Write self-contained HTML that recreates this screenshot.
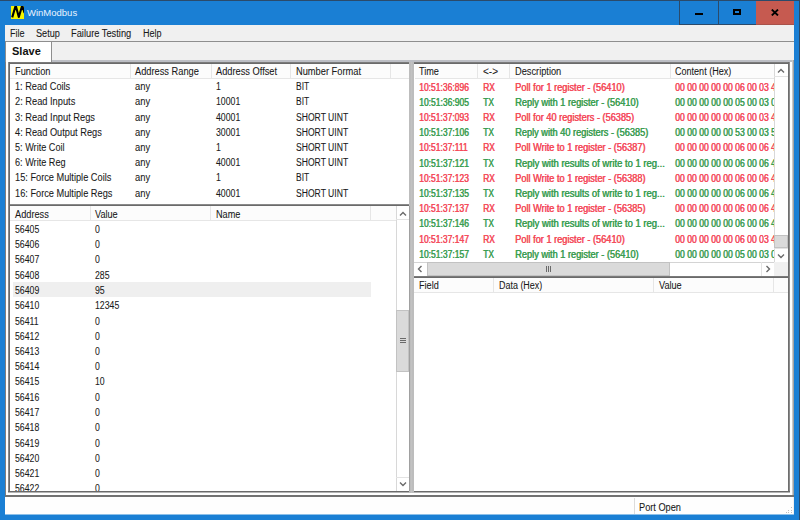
<!DOCTYPE html><html><head><meta charset="utf-8"><style>
*{margin:0;padding:0;box-sizing:border-box}
html,body{width:800px;height:520px;overflow:hidden;background:#1a7fd4;font-family:"Liberation Sans",sans-serif;position:relative}
.a{position:absolute}
.t{position:absolute;line-height:12px;white-space:nowrap;transform-origin:0 0;-webkit-text-stroke-width:0.08px}
.clip{position:absolute;overflow:hidden}
</style></head><body><div class="a" style="left:0px;top:0px;width:800px;height:1px;background:#2b4a6a;"></div>
<div class="a" style="left:799px;top:0px;width:1px;height:520px;background:#2b4a6a;"></div>
<div class="a" style="left:11px;top:6px;width:13px;height:13px;background:#f6f600;"></div>
<svg class="a" style="left:11px;top:6px;overflow:hidden" width="13" height="13"><path d="M1.2 11.4 L4.7 -0.5 L7.8 11 L11.2 -0.5 L13.6 7" stroke="#000" stroke-width="2.1" stroke-linejoin="round" fill="none"/></svg>
<div class="t" style="left:27px;top:7px;color:#eaf4ff;font-size:9.5px;transform:scaleX(1.000);-webkit-text-stroke-width:0">WinModbus</div>
<div class="a" style="left:679px;top:0px;width:1px;height:25px;background:#2b4a6a;"></div>
<div class="a" style="left:718px;top:0px;width:1px;height:25px;background:#2b4a6a;"></div>
<div class="a" style="left:679px;top:24px;width:77px;height:1px;background:#2b4a6a;"></div>
<div class="a" style="left:756px;top:1px;width:38px;height:24px;background:#c65a50;"></div>
<div class="a" style="left:756px;top:24px;width:38px;height:1px;background:#a8524a;"></div>
<div class="a" style="left:695px;top:13px;width:8px;height:2px;background:#000;"></div>
<div class="a" style="left:733px;top:9px;width:8px;height:6px;background:transparent;border:2px solid #000"></div>
<svg class="a" style="left:771px;top:9px" width="8" height="7"><path d="M0.8 0.6 L7 6.4 M7 0.6 L0.8 6.4" stroke="#000" stroke-width="1.9" fill="none"/></svg>
<div class="a" style="left:5px;top:25px;width:789px;height:490px;background:#f0f0f0;"></div>
<div class="t" style="left:10px;top:28px;color:#1a1a1a;font-size:10px;transform:scaleX(0.903);">File</div>
<div class="t" style="left:36px;top:28px;color:#1a1a1a;font-size:10px;transform:scaleX(0.915);">Setup</div>
<div class="t" style="left:71px;top:28px;color:#1a1a1a;font-size:10px;transform:scaleX(0.929);">Failure Testing</div>
<div class="t" style="left:143px;top:28px;color:#1a1a1a;font-size:10px;transform:scaleX(0.906);">Help</div>
<div class="a" style="left:5px;top:41px;width:789px;height:1px;background:#8e8e8e;"></div>
<div class="a" style="left:5px;top:60px;width:789px;height:437px;background:#ffffff;"></div>
<div class="a" style="left:5px;top:60px;width:789px;height:2px;background:#bcbec4;"></div>
<div class="a" style="left:5px;top:60px;width:1px;height:437px;background:#7e7e7e;"></div>
<div class="a" style="left:792px;top:60px;width:1px;height:437px;background:#c8c8c8;"></div>
<div class="a" style="left:793px;top:60px;width:1px;height:437px;background:#a2a2a2;"></div>
<div class="a" style="left:5px;top:495px;width:789px;height:2px;background:#727272;"></div>
<div class="a" style="left:8px;top:62px;width:782px;height:431px;background:#ffffff;"></div>
<div class="a" style="left:8px;top:62px;width:782px;height:1px;background:#7a7a7a;"></div>
<div class="a" style="left:8px;top:63px;width:782px;height:1px;background:#6a6a6a;"></div>
<div class="a" style="left:8px;top:62px;width:1px;height:431px;background:#8a8a8a;"></div>
<div class="a" style="left:9px;top:62px;width:1px;height:431px;background:#6a6a6a;"></div>
<div class="a" style="left:788px;top:62px;width:1px;height:431px;background:#6e6e6e;"></div>
<div class="a" style="left:789px;top:62px;width:1px;height:431px;background:#8a8a8a;"></div>
<div class="a" style="left:8px;top:491px;width:782px;height:1px;background:#6a6a6a;"></div>
<div class="a" style="left:8px;top:492px;width:782px;height:1px;background:#b4b4b4;"></div>
<div class="a" style="left:10px;top:204px;width:399px;height:1px;background:#8a8a8a;"></div>
<div class="a" style="left:10px;top:205px;width:399px;height:1px;background:#6a6a6a;"></div>
<div class="a" style="left:414px;top:276px;width:374px;height:1px;background:#7a7a7a;"></div>
<div class="a" style="left:414px;top:277px;width:374px;height:1px;background:#6a6a6a;"></div>
<div class="a" style="left:5px;top:41px;width:47px;height:21px;background:#ffffff;border:1px solid #8e8e8e;border-bottom:none"></div>
<div class="t" style="left:12px;top:45px;color:#111;font-size:11px;transform:scaleX(1.000);font-weight:bold;-webkit-text-stroke-width:0">Slave</div>
<div class="a" style="left:10px;top:64px;width:399px;height:15px;background:#fcfcfc;border-bottom:1px solid #e6e6e6"></div>
<div class="t" style="left:15px;top:66px;color:#1a1a1a;font-size:10px;transform:scaleX(0.924);">Function</div>
<div class="a" style="left:130px;top:64px;width:1px;height:15px;background:#e6e6e6;"></div>
<div class="t" style="left:135px;top:66px;color:#1a1a1a;font-size:10px;transform:scaleX(0.927);">Address Range</div>
<div class="a" style="left:211px;top:64px;width:1px;height:15px;background:#e6e6e6;"></div>
<div class="t" style="left:216px;top:66px;color:#1a1a1a;font-size:10px;transform:scaleX(0.926);">Address Offset</div>
<div class="a" style="left:290px;top:64px;width:1px;height:15px;background:#e6e6e6;"></div>
<div class="t" style="left:296px;top:66px;color:#1a1a1a;font-size:10px;transform:scaleX(0.928);">Number Format</div>
<div class="a" style="left:390px;top:64px;width:1px;height:15px;background:#e6e6e6;"></div>
<div class="t" style="left:15px;top:81px;color:#1a1a1a;font-size:10px;transform:scaleX(0.919);">1: Read Coils</div>
<div class="t" style="left:135px;top:81px;color:#1a1a1a;font-size:10px;transform:scaleX(0.938);">any</div>
<div class="t" style="left:216px;top:81px;color:#1a1a1a;font-size:10px;transform:scaleX(0.872);">1</div>
<div class="t" style="left:296px;top:81px;color:#1a1a1a;font-size:10px;transform:scaleX(0.845);">BIT</div>
<div class="t" style="left:15px;top:96px;color:#1a1a1a;font-size:10px;transform:scaleX(0.927);">2: Read Inputs</div>
<div class="t" style="left:135px;top:96px;color:#1a1a1a;font-size:10px;transform:scaleX(0.938);">any</div>
<div class="t" style="left:216px;top:96px;color:#1a1a1a;font-size:10px;transform:scaleX(0.872);">10001</div>
<div class="t" style="left:296px;top:96px;color:#1a1a1a;font-size:10px;transform:scaleX(0.845);">BIT</div>
<div class="t" style="left:15px;top:112px;color:#1a1a1a;font-size:10px;transform:scaleX(0.928);">3: Read Input Regs</div>
<div class="t" style="left:135px;top:112px;color:#1a1a1a;font-size:10px;transform:scaleX(0.938);">any</div>
<div class="t" style="left:216px;top:112px;color:#1a1a1a;font-size:10px;transform:scaleX(0.872);">40001</div>
<div class="t" style="left:296px;top:112px;color:#1a1a1a;font-size:10px;transform:scaleX(0.858);">SHORT UINT</div>
<div class="t" style="left:15px;top:127px;color:#1a1a1a;font-size:10px;transform:scaleX(0.924);">4: Read Output Regs</div>
<div class="t" style="left:135px;top:127px;color:#1a1a1a;font-size:10px;transform:scaleX(0.938);">any</div>
<div class="t" style="left:216px;top:127px;color:#1a1a1a;font-size:10px;transform:scaleX(0.872);">30001</div>
<div class="t" style="left:296px;top:127px;color:#1a1a1a;font-size:10px;transform:scaleX(0.858);">SHORT UINT</div>
<div class="t" style="left:15px;top:142px;color:#1a1a1a;font-size:10px;transform:scaleX(0.913);">5: Write Coil</div>
<div class="t" style="left:135px;top:142px;color:#1a1a1a;font-size:10px;transform:scaleX(0.938);">any</div>
<div class="t" style="left:216px;top:142px;color:#1a1a1a;font-size:10px;transform:scaleX(0.872);">1</div>
<div class="t" style="left:296px;top:142px;color:#1a1a1a;font-size:10px;transform:scaleX(0.858);">SHORT UINT</div>
<div class="t" style="left:15px;top:157px;color:#1a1a1a;font-size:10px;transform:scaleX(0.913);">6: Write Reg</div>
<div class="t" style="left:135px;top:157px;color:#1a1a1a;font-size:10px;transform:scaleX(0.938);">any</div>
<div class="t" style="left:216px;top:157px;color:#1a1a1a;font-size:10px;transform:scaleX(0.872);">40001</div>
<div class="t" style="left:296px;top:157px;color:#1a1a1a;font-size:10px;transform:scaleX(0.858);">SHORT UINT</div>
<div class="t" style="left:15px;top:172px;color:#1a1a1a;font-size:10px;transform:scaleX(0.922);">15: Force Multiple Coils</div>
<div class="t" style="left:135px;top:172px;color:#1a1a1a;font-size:10px;transform:scaleX(0.938);">any</div>
<div class="t" style="left:216px;top:172px;color:#1a1a1a;font-size:10px;transform:scaleX(0.872);">1</div>
<div class="t" style="left:296px;top:172px;color:#1a1a1a;font-size:10px;transform:scaleX(0.845);">BIT</div>
<div class="t" style="left:15px;top:188px;color:#1a1a1a;font-size:10px;transform:scaleX(0.922);">16: Force Multiple Regs</div>
<div class="t" style="left:135px;top:188px;color:#1a1a1a;font-size:10px;transform:scaleX(0.938);">any</div>
<div class="t" style="left:216px;top:188px;color:#1a1a1a;font-size:10px;transform:scaleX(0.872);">40001</div>
<div class="t" style="left:296px;top:188px;color:#1a1a1a;font-size:10px;transform:scaleX(0.858);">SHORT UINT</div>
<div class="clip" style="left:10px;top:206px;width:386px;height:285px">
<div class="a" style="left:0;top:0;width:386px;height:15px;background:#fcfcfc;border-bottom:1px solid #e6e6e6"></div>
<div class="a" style="left:80px;top:0;width:1px;height:15px;background:#e6e6e6"></div>
<div class="a" style="left:200px;top:0;width:1px;height:15px;background:#e6e6e6"></div>
<div class="a" style="left:360px;top:0;width:1px;height:15px;background:#e6e6e6"></div>
<div class="t" style="left:5px;top:3px;color:#1a1a1a;font-size:10px;transform:scaleX(0.921)">Address</div>
<div class="t" style="left:85px;top:3px;color:#1a1a1a;font-size:10px;transform:scaleX(0.914)">Value</div>
<div class="t" style="left:206px;top:3px;color:#1a1a1a;font-size:10px;transform:scaleX(0.913)">Name</div>
<div class="a" style="left:3px;top:76px;width:358px;height:15px;background:#efefef"></div>
<div class="t" style="left:5px;top:18px;color:#1a1a1a;font-size:10px;transform:scaleX(0.872)">56405</div>
<div class="t" style="left:85px;top:18px;color:#1a1a1a;font-size:10px;transform:scaleX(0.872)">0</div>
<div class="t" style="left:5px;top:33px;color:#1a1a1a;font-size:10px;transform:scaleX(0.872)">56406</div>
<div class="t" style="left:85px;top:33px;color:#1a1a1a;font-size:10px;transform:scaleX(0.872)">0</div>
<div class="t" style="left:5px;top:48px;color:#1a1a1a;font-size:10px;transform:scaleX(0.872)">56407</div>
<div class="t" style="left:85px;top:48px;color:#1a1a1a;font-size:10px;transform:scaleX(0.872)">0</div>
<div class="t" style="left:5px;top:64px;color:#1a1a1a;font-size:10px;transform:scaleX(0.872)">56408</div>
<div class="t" style="left:85px;top:64px;color:#1a1a1a;font-size:10px;transform:scaleX(0.872)">285</div>
<div class="t" style="left:5px;top:79px;color:#1a1a1a;font-size:10px;transform:scaleX(0.872)">56409</div>
<div class="t" style="left:85px;top:79px;color:#1a1a1a;font-size:10px;transform:scaleX(0.872)">95</div>
<div class="t" style="left:5px;top:94px;color:#1a1a1a;font-size:10px;transform:scaleX(0.872)">56410</div>
<div class="t" style="left:85px;top:94px;color:#1a1a1a;font-size:10px;transform:scaleX(0.872)">12345</div>
<div class="t" style="left:5px;top:110px;color:#1a1a1a;font-size:10px;transform:scaleX(0.872)">56411</div>
<div class="t" style="left:85px;top:110px;color:#1a1a1a;font-size:10px;transform:scaleX(0.872)">0</div>
<div class="t" style="left:5px;top:125px;color:#1a1a1a;font-size:10px;transform:scaleX(0.872)">56412</div>
<div class="t" style="left:85px;top:125px;color:#1a1a1a;font-size:10px;transform:scaleX(0.872)">0</div>
<div class="t" style="left:5px;top:140px;color:#1a1a1a;font-size:10px;transform:scaleX(0.872)">56413</div>
<div class="t" style="left:85px;top:140px;color:#1a1a1a;font-size:10px;transform:scaleX(0.872)">0</div>
<div class="t" style="left:5px;top:155px;color:#1a1a1a;font-size:10px;transform:scaleX(0.872)">56414</div>
<div class="t" style="left:85px;top:155px;color:#1a1a1a;font-size:10px;transform:scaleX(0.872)">0</div>
<div class="t" style="left:5px;top:170px;color:#1a1a1a;font-size:10px;transform:scaleX(0.872)">56415</div>
<div class="t" style="left:85px;top:170px;color:#1a1a1a;font-size:10px;transform:scaleX(0.872)">10</div>
<div class="t" style="left:5px;top:186px;color:#1a1a1a;font-size:10px;transform:scaleX(0.872)">56416</div>
<div class="t" style="left:85px;top:186px;color:#1a1a1a;font-size:10px;transform:scaleX(0.872)">0</div>
<div class="t" style="left:5px;top:201px;color:#1a1a1a;font-size:10px;transform:scaleX(0.872)">56417</div>
<div class="t" style="left:85px;top:201px;color:#1a1a1a;font-size:10px;transform:scaleX(0.872)">0</div>
<div class="t" style="left:5px;top:216px;color:#1a1a1a;font-size:10px;transform:scaleX(0.872)">56418</div>
<div class="t" style="left:85px;top:216px;color:#1a1a1a;font-size:10px;transform:scaleX(0.872)">0</div>
<div class="t" style="left:5px;top:232px;color:#1a1a1a;font-size:10px;transform:scaleX(0.872)">56419</div>
<div class="t" style="left:85px;top:232px;color:#1a1a1a;font-size:10px;transform:scaleX(0.872)">0</div>
<div class="t" style="left:5px;top:247px;color:#1a1a1a;font-size:10px;transform:scaleX(0.872)">56420</div>
<div class="t" style="left:85px;top:247px;color:#1a1a1a;font-size:10px;transform:scaleX(0.872)">0</div>
<div class="t" style="left:5px;top:262px;color:#1a1a1a;font-size:10px;transform:scaleX(0.872)">56421</div>
<div class="t" style="left:85px;top:262px;color:#1a1a1a;font-size:10px;transform:scaleX(0.872)">0</div>
<div class="t" style="left:5px;top:277px;color:#1a1a1a;font-size:10px;transform:scaleX(0.872)">56422</div>
<div class="t" style="left:85px;top:277px;color:#1a1a1a;font-size:10px;transform:scaleX(0.872)">0</div>
</div>
<div class="a" style="left:396px;top:206px;width:13px;height:285px;background:#ffffff;border-left:1px solid #d8d8d8"></div>
<div class="a" style="left:396px;top:219px;width:13px;height:1px;background:#e3e3e3;"></div>
<div class="a" style="left:396px;top:477px;width:13px;height:1px;background:#e3e3e3;"></div>
<div class="a" style="left:396px;top:310px;width:13px;height:62px;background:#dadada;border:1px solid #c2c2c2"></div>
<div class="a" style="left:400px;top:338px;width:6px;height:1px;background:#6a6a6a;"></div>
<div class="a" style="left:400px;top:340px;width:6px;height:1px;background:#6a6a6a;"></div>
<div class="a" style="left:400px;top:342px;width:6px;height:1px;background:#6a6a6a;"></div>
<svg class="a" style="left:399px;top:211px" width="8" height="6"><path d="M1 4.5 L4 1.5 L7 4.5" stroke="#6a6a6a" stroke-width="1.4" fill="none"/></svg>
<svg class="a" style="left:399px;top:481px" width="8" height="6"><path d="M1 1.5 L4 4.5 L7 1.5" stroke="#6a6a6a" stroke-width="1.4" fill="none"/></svg>
<div class="a" style="left:409px;top:62px;width:5px;height:431px;background:#bdbdbd;"></div>
<div class="a" style="left:411px;top:62px;width:1px;height:431px;background:#c2c2c2;"></div>
<div class="a" style="left:409px;top:206px;width:1px;height:285px;background:#a0a0a0;"></div>
<div class="clip" style="left:415px;top:64px;width:359px;height:198px">
<div class="a" style="left:0;top:0;width:359px;height:15px;background:#fcfcfc;border-bottom:1px solid #e6e6e6"></div>
<div class="a" style="left:62px;top:0;width:1px;height:15px;background:#e6e6e6"></div>
<div class="a" style="left:94px;top:0;width:1px;height:15px;background:#e6e6e6"></div>
<div class="a" style="left:255px;top:0;width:1px;height:15px;background:#e6e6e6"></div>
<div class="t" style="left:4px;top:2px;color:#1a1a1a;font-size:10px;transform:scaleX(0.913)">Time</div>
<div class="t" style="left:68px;top:2px;color:#1a1a1a;font-size:10px;transform:scaleX(1.000)">&lt;-&gt;</div>
<div class="t" style="left:100px;top:2px;color:#1a1a1a;font-size:10px;transform:scaleX(0.925)">Description</div>
<div class="t" style="left:260px;top:2px;color:#1a1a1a;font-size:10px;transform:scaleX(0.904)">Content (Hex)</div>
<div class="t" style="left:4px;top:18px;color:#f54a5a;font-size:10px;transform:scaleX(0.853);-webkit-text-stroke-width:0.1px;text-shadow:0.45px 0 0 #f54a5a">10:51:36:896</div>
<div class="t" style="left:68px;top:18px;color:#f54a5a;font-size:10px;transform:scaleX(0.845);-webkit-text-stroke-width:0.1px;text-shadow:0.45px 0 0 #f54a5a">RX</div>
<div class="t" style="left:100px;top:18px;color:#f54a5a;font-size:10px;transform:scaleX(0.921);-webkit-text-stroke-width:0.1px;text-shadow:0.45px 0 0 #f54a5a">Poll for 1 register - (56410)</div>
<div class="t" style="left:260px;top:18px;color:#f54a5a;font-size:10px;transform:scaleX(0.863);-webkit-text-stroke-width:0.1px;text-shadow:0.45px 0 0 #f54a5a">00 00 00 00 00 06 00 03 4</div>
<div class="t" style="left:4px;top:33px;color:#3b9e52;font-size:10px;transform:scaleX(0.853);-webkit-text-stroke-width:0.1px;text-shadow:0.45px 0 0 #3b9e52">10:51:36:905</div>
<div class="t" style="left:68px;top:33px;color:#3b9e52;font-size:10px;transform:scaleX(0.845);-webkit-text-stroke-width:0.1px;text-shadow:0.45px 0 0 #3b9e52">TX</div>
<div class="t" style="left:100px;top:33px;color:#3b9e52;font-size:10px;transform:scaleX(0.922);-webkit-text-stroke-width:0.1px;text-shadow:0.45px 0 0 #3b9e52">Reply with 1 register - (56410)</div>
<div class="t" style="left:260px;top:33px;color:#3b9e52;font-size:10px;transform:scaleX(0.863);-webkit-text-stroke-width:0.1px;text-shadow:0.45px 0 0 #3b9e52">00 00 00 00 00 05 00 03 0</div>
<div class="t" style="left:4px;top:48px;color:#f54a5a;font-size:10px;transform:scaleX(0.853);-webkit-text-stroke-width:0.1px;text-shadow:0.45px 0 0 #f54a5a">10:51:37:093</div>
<div class="t" style="left:68px;top:48px;color:#f54a5a;font-size:10px;transform:scaleX(0.845);-webkit-text-stroke-width:0.1px;text-shadow:0.45px 0 0 #f54a5a">RX</div>
<div class="t" style="left:100px;top:48px;color:#f54a5a;font-size:10px;transform:scaleX(0.919);-webkit-text-stroke-width:0.1px;text-shadow:0.45px 0 0 #f54a5a">Poll for 40 registers - (56385)</div>
<div class="t" style="left:260px;top:48px;color:#f54a5a;font-size:10px;transform:scaleX(0.863);-webkit-text-stroke-width:0.1px;text-shadow:0.45px 0 0 #f54a5a">00 00 00 00 00 06 00 03 4</div>
<div class="t" style="left:4px;top:63px;color:#3b9e52;font-size:10px;transform:scaleX(0.853);-webkit-text-stroke-width:0.1px;text-shadow:0.45px 0 0 #3b9e52">10:51:37:106</div>
<div class="t" style="left:68px;top:63px;color:#3b9e52;font-size:10px;transform:scaleX(0.845);-webkit-text-stroke-width:0.1px;text-shadow:0.45px 0 0 #3b9e52">TX</div>
<div class="t" style="left:100px;top:63px;color:#3b9e52;font-size:10px;transform:scaleX(0.921);-webkit-text-stroke-width:0.1px;text-shadow:0.45px 0 0 #3b9e52">Reply with 40 registers - (56385)</div>
<div class="t" style="left:260px;top:63px;color:#3b9e52;font-size:10px;transform:scaleX(0.863);-webkit-text-stroke-width:0.1px;text-shadow:0.45px 0 0 #3b9e52">00 00 00 00 00 53 00 03 5</div>
<div class="t" style="left:4px;top:78px;color:#f54a5a;font-size:10px;transform:scaleX(0.853);-webkit-text-stroke-width:0.1px;text-shadow:0.45px 0 0 #f54a5a">10:51:37:111</div>
<div class="t" style="left:68px;top:78px;color:#f54a5a;font-size:10px;transform:scaleX(0.845);-webkit-text-stroke-width:0.1px;text-shadow:0.45px 0 0 #f54a5a">RX</div>
<div class="t" style="left:100px;top:78px;color:#f54a5a;font-size:10px;transform:scaleX(0.921);-webkit-text-stroke-width:0.1px;text-shadow:0.45px 0 0 #f54a5a">Poll Write to 1 register - (56387)</div>
<div class="t" style="left:260px;top:78px;color:#f54a5a;font-size:10px;transform:scaleX(0.863);-webkit-text-stroke-width:0.1px;text-shadow:0.45px 0 0 #f54a5a">00 00 00 00 00 06 00 06 4</div>
<div class="t" style="left:4px;top:94px;color:#3b9e52;font-size:10px;transform:scaleX(0.853);-webkit-text-stroke-width:0.1px;text-shadow:0.45px 0 0 #3b9e52">10:51:37:121</div>
<div class="t" style="left:68px;top:94px;color:#3b9e52;font-size:10px;transform:scaleX(0.845);-webkit-text-stroke-width:0.1px;text-shadow:0.45px 0 0 #3b9e52">TX</div>
<div class="t" style="left:100px;top:94px;color:#3b9e52;font-size:10px;transform:scaleX(0.945);-webkit-text-stroke-width:0.1px;text-shadow:0.45px 0 0 #3b9e52">Reply with results of write to 1 reg...</div>
<div class="t" style="left:260px;top:94px;color:#3b9e52;font-size:10px;transform:scaleX(0.863);-webkit-text-stroke-width:0.1px;text-shadow:0.45px 0 0 #3b9e52">00 00 00 00 00 06 00 06 4</div>
<div class="t" style="left:4px;top:109px;color:#f54a5a;font-size:10px;transform:scaleX(0.853);-webkit-text-stroke-width:0.1px;text-shadow:0.45px 0 0 #f54a5a">10:51:37:123</div>
<div class="t" style="left:68px;top:109px;color:#f54a5a;font-size:10px;transform:scaleX(0.845);-webkit-text-stroke-width:0.1px;text-shadow:0.45px 0 0 #f54a5a">RX</div>
<div class="t" style="left:100px;top:109px;color:#f54a5a;font-size:10px;transform:scaleX(0.921);-webkit-text-stroke-width:0.1px;text-shadow:0.45px 0 0 #f54a5a">Poll Write to 1 register - (56388)</div>
<div class="t" style="left:260px;top:109px;color:#f54a5a;font-size:10px;transform:scaleX(0.863);-webkit-text-stroke-width:0.1px;text-shadow:0.45px 0 0 #f54a5a">00 00 00 00 00 06 00 06 4</div>
<div class="t" style="left:4px;top:124px;color:#3b9e52;font-size:10px;transform:scaleX(0.853);-webkit-text-stroke-width:0.1px;text-shadow:0.45px 0 0 #3b9e52">10:51:37:135</div>
<div class="t" style="left:68px;top:124px;color:#3b9e52;font-size:10px;transform:scaleX(0.845);-webkit-text-stroke-width:0.1px;text-shadow:0.45px 0 0 #3b9e52">TX</div>
<div class="t" style="left:100px;top:124px;color:#3b9e52;font-size:10px;transform:scaleX(0.945);-webkit-text-stroke-width:0.1px;text-shadow:0.45px 0 0 #3b9e52">Reply with results of write to 1 reg...</div>
<div class="t" style="left:260px;top:124px;color:#3b9e52;font-size:10px;transform:scaleX(0.863);-webkit-text-stroke-width:0.1px;text-shadow:0.45px 0 0 #3b9e52">00 00 00 00 00 06 00 06 4</div>
<div class="t" style="left:4px;top:139px;color:#f54a5a;font-size:10px;transform:scaleX(0.853);-webkit-text-stroke-width:0.1px;text-shadow:0.45px 0 0 #f54a5a">10:51:37:137</div>
<div class="t" style="left:68px;top:139px;color:#f54a5a;font-size:10px;transform:scaleX(0.845);-webkit-text-stroke-width:0.1px;text-shadow:0.45px 0 0 #f54a5a">RX</div>
<div class="t" style="left:100px;top:139px;color:#f54a5a;font-size:10px;transform:scaleX(0.921);-webkit-text-stroke-width:0.1px;text-shadow:0.45px 0 0 #f54a5a">Poll Write to 1 register - (56385)</div>
<div class="t" style="left:260px;top:139px;color:#f54a5a;font-size:10px;transform:scaleX(0.863);-webkit-text-stroke-width:0.1px;text-shadow:0.45px 0 0 #f54a5a">00 00 00 00 00 06 00 06 4</div>
<div class="t" style="left:4px;top:154px;color:#3b9e52;font-size:10px;transform:scaleX(0.853);-webkit-text-stroke-width:0.1px;text-shadow:0.45px 0 0 #3b9e52">10:51:37:146</div>
<div class="t" style="left:68px;top:154px;color:#3b9e52;font-size:10px;transform:scaleX(0.845);-webkit-text-stroke-width:0.1px;text-shadow:0.45px 0 0 #3b9e52">TX</div>
<div class="t" style="left:100px;top:154px;color:#3b9e52;font-size:10px;transform:scaleX(0.945);-webkit-text-stroke-width:0.1px;text-shadow:0.45px 0 0 #3b9e52">Reply with results of write to 1 reg...</div>
<div class="t" style="left:260px;top:154px;color:#3b9e52;font-size:10px;transform:scaleX(0.863);-webkit-text-stroke-width:0.1px;text-shadow:0.45px 0 0 #3b9e52">00 00 00 00 00 06 00 06 4</div>
<div class="t" style="left:4px;top:170px;color:#f54a5a;font-size:10px;transform:scaleX(0.853);-webkit-text-stroke-width:0.1px;text-shadow:0.45px 0 0 #f54a5a">10:51:37:147</div>
<div class="t" style="left:68px;top:170px;color:#f54a5a;font-size:10px;transform:scaleX(0.845);-webkit-text-stroke-width:0.1px;text-shadow:0.45px 0 0 #f54a5a">RX</div>
<div class="t" style="left:100px;top:170px;color:#f54a5a;font-size:10px;transform:scaleX(0.921);-webkit-text-stroke-width:0.1px;text-shadow:0.45px 0 0 #f54a5a">Poll for 1 register - (56410)</div>
<div class="t" style="left:260px;top:170px;color:#f54a5a;font-size:10px;transform:scaleX(0.863);-webkit-text-stroke-width:0.1px;text-shadow:0.45px 0 0 #f54a5a">00 00 00 00 00 06 00 03 4</div>
<div class="t" style="left:4px;top:185px;color:#3b9e52;font-size:10px;transform:scaleX(0.853);-webkit-text-stroke-width:0.1px;text-shadow:0.45px 0 0 #3b9e52">10:51:37:157</div>
<div class="t" style="left:68px;top:185px;color:#3b9e52;font-size:10px;transform:scaleX(0.845);-webkit-text-stroke-width:0.1px;text-shadow:0.45px 0 0 #3b9e52">TX</div>
<div class="t" style="left:100px;top:185px;color:#3b9e52;font-size:10px;transform:scaleX(0.922);-webkit-text-stroke-width:0.1px;text-shadow:0.45px 0 0 #3b9e52">Reply with 1 register - (56410)</div>
<div class="t" style="left:260px;top:185px;color:#3b9e52;font-size:10px;transform:scaleX(0.863);-webkit-text-stroke-width:0.1px;text-shadow:0.45px 0 0 #3b9e52">00 00 00 00 00 05 00 03 0</div>
</div>
<div class="a" style="left:774px;top:64px;width:14px;height:198px;background:#ffffff;border-left:1px solid #d8d8d8"></div>
<div class="a" style="left:774px;top:76px;width:14px;height:1px;background:#e3e3e3;"></div>
<div class="a" style="left:774px;top:248px;width:14px;height:1px;background:#e3e3e3;"></div>
<div class="a" style="left:774px;top:235px;width:14px;height:13px;background:#dadada;border:1px solid #c2c2c2"></div>
<svg class="a" style="left:777px;top:68px" width="8" height="6"><path d="M1 4.5 L4 1.5 L7 4.5" stroke="#6a6a6a" stroke-width="1.4" fill="none"/></svg>
<svg class="a" style="left:777px;top:253px" width="8" height="6"><path d="M1 1.5 L4 4.5 L7 1.5" stroke="#6a6a6a" stroke-width="1.4" fill="none"/></svg>
<div class="a" style="left:414px;top:262px;width:374px;height:14px;background:#ffffff;border-top:1px solid #d4d4d4"></div>
<div class="a" style="left:427px;top:262px;width:243px;height:14px;background:#dadada;border:1px solid #c2c2c2"></div>
<div class="a" style="left:761px;top:262px;width:1px;height:14px;background:#e3e3e3;"></div>
<div class="a" style="left:774px;top:262px;width:14px;height:14px;background:#f0f0f0;"></div>
<div class="a" style="left:546px;top:266px;width:1px;height:6px;background:#6a6a6a;"></div>
<div class="a" style="left:548px;top:266px;width:1px;height:6px;background:#6a6a6a;"></div>
<div class="a" style="left:550px;top:266px;width:1px;height:6px;background:#6a6a6a;"></div>
<svg class="a" style="left:417px;top:265px" width="6" height="8"><path d="M4.5 1 L1.5 4 L4.5 7" stroke="#6a6a6a" stroke-width="1.4" fill="none"/></svg>
<svg class="a" style="left:765px;top:265px" width="6" height="8"><path d="M1.5 1 L4.5 4 L1.5 7" stroke="#6a6a6a" stroke-width="1.4" fill="none"/></svg>
<div class="a" style="left:414px;top:278px;width:374px;height:15px;background:#fcfcfc;border-bottom:1px solid #e6e6e6"></div>
<div class="t" style="left:419px;top:280px;color:#1a1a1a;font-size:10px;transform:scaleX(0.912);">Field</div>
<div class="a" style="left:493px;top:278px;width:1px;height:15px;background:#e6e6e6;"></div>
<div class="t" style="left:499px;top:280px;color:#1a1a1a;font-size:10px;transform:scaleX(0.895);">Data (Hex)</div>
<div class="a" style="left:653px;top:278px;width:1px;height:15px;background:#e6e6e6;"></div>
<div class="t" style="left:659px;top:280px;color:#1a1a1a;font-size:10px;transform:scaleX(0.914);">Value</div>
<div class="a" style="left:773px;top:278px;width:1px;height:15px;background:#e6e6e6;"></div>
<div class="a" style="left:5px;top:497px;width:788px;height:17px;background:#fefefe;"></div>
<div class="a" style="left:5px;top:514px;width:789px;height:1px;background:#8cbfe8;"></div>
<div class="a" style="left:634px;top:498px;width:1px;height:16px;background:#dcdcdc;"></div>
<div class="t" style="left:639px;top:502px;color:#1a1a1a;font-size:10px;transform:scaleX(0.921);">Port Open</div>
<div class="a" style="left:791px;top:507px;width:1px;height:1px;background:#bdbdbd;"></div>
<div class="a" style="left:791px;top:510px;width:1px;height:1px;background:#bdbdbd;"></div>
<div class="a" style="left:788px;top:510px;width:1px;height:1px;background:#bdbdbd;"></div>
<div class="a" style="left:791px;top:512px;width:1px;height:1px;background:#bdbdbd;"></div>
<div class="a" style="left:788px;top:512px;width:1px;height:1px;background:#bdbdbd;"></div>
<div class="a" style="left:786px;top:512px;width:1px;height:1px;background:#bdbdbd;"></div></body></html>
